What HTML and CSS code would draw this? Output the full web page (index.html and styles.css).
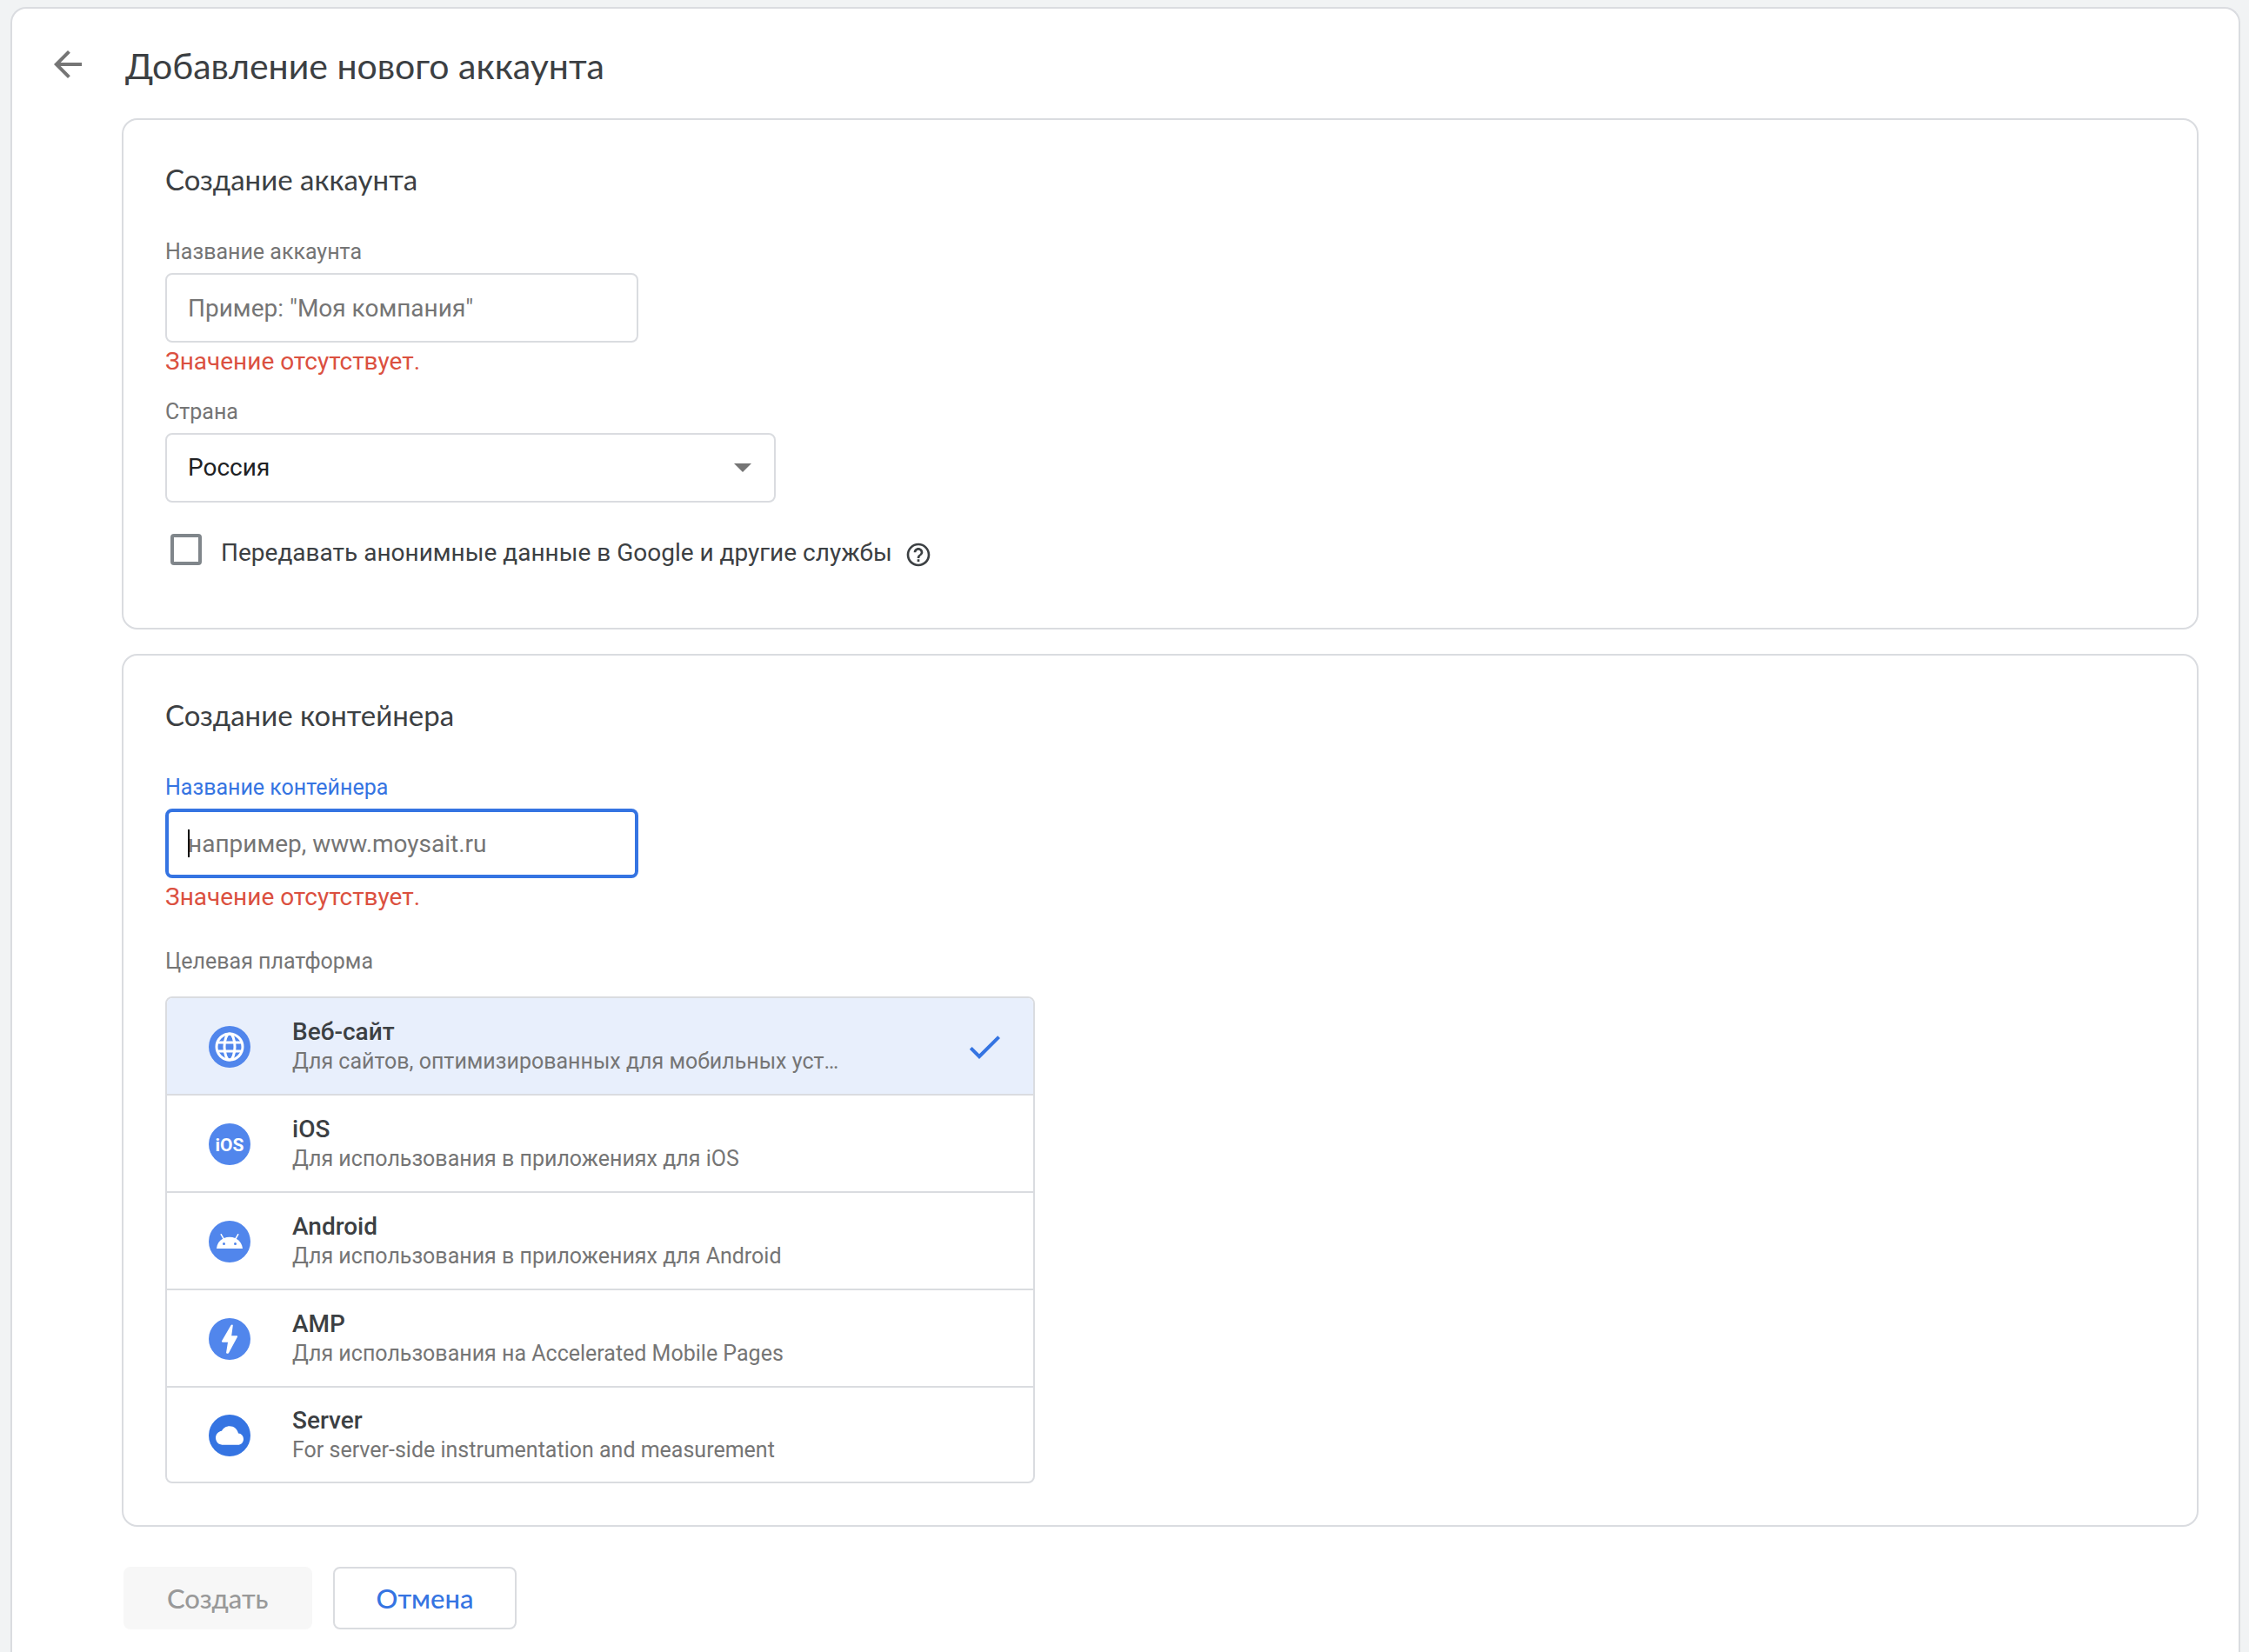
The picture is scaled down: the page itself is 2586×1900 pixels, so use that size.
FILE: index.html
```html
<!DOCTYPE html>
<html lang="ru">
<head>
    <meta charset="UTF-8">
    <meta name="viewport" content="width=device-width, initial-scale=1.0">
    <title>Добавление нового аккаунта</title>
    <link rel="stylesheet" href="styles.css">
</head>
<body>

    <main class="page">
        <header class="page-header">
            <button type="button" class="back" aria-label="Назад">
                <svg viewBox="0 0 24 24"><path d="M20 11H7.83l5.59-5.59L12 4l-8 8 8 8 1.41-1.41L7.83 13H20z"/></svg>
            </button>
            <h1>Добавление нового аккаунта</h1>
        </header>

        <form class="account-form">
            <section class="card">
                <h2>Создание аккаунта</h2>

                <div class="field">
                    <label for="account">Название аккаунта</label>
                    <input type="text" id="account" placeholder="Пример: &quot;Моя компания&quot;">
                    <p class="error">Значение отсутствует.</p>
                </div>

                <div class="field">
                    <label for="country">Страна</label>
                    <div class="select">
                        <select id="country">
                            <option>Россия</option>
                        </select>
                    </div>
                </div>

                <div class="share">
                    <input type="checkbox" id="share">
                    <label for="share">Передавать анонимные данные в Google и другие службы</label>
                    <button type="button" class="help" aria-label="Справка">
                        <svg viewBox="0 0 24 24"><path d="M11 18h2v-2h-2v2zm1-16C6.48 2 2 6.48 2 12s4.480 10 10 10 10-4.480 10-10S17.520 2 12 2zm0 18c-4.410 0-8-3.590-8-8s3.590-8 8-8 8 3.590 8 8-3.590 8-8 8zm0-14c-2.210 0-4 1.790-4 4h2c0-1.100.9-2 2-2s2 .9 2 2c0 2-3 1.750-3 5h2c0-2.250 3-2.500 3-5 0-2.210-1.790-4-4-4z"/></svg>
                    </button>
                </div>
            </section>

            <section class="card">
                <h2>Создание контейнера</h2>

                <div class="field active">
                    <label for="container">Название контейнера</label>
                    <div class="caret">
                        <input type="text" id="container" placeholder="например, www.moysait.ru">
                    </div>
                    <p class="error">Значение отсутствует.</p>
                </div>

                <p class="caption" id="platform-label">Целевая платформа</p>
                <ul class="platforms" role="listbox" aria-labelledby="platform-label">
                    <li class="platform selected" role="option" aria-selected="true">
                        <svg class="icon" viewBox="0 0 48 48">
                            <circle cx="24" cy="24" r="24"/>
                            <g class="line">
                                <circle cx="24" cy="24" r="15"/>
                                <ellipse cx="24" cy="24" rx="6" ry="15"/>
                                <path d="M10 19h28M10 29h28"/>
                            </g>
                        </svg>
                        <div class="info">
                            <h3>Веб-сайт</h3>
                            <p>Для сайтов, оптимизированных для мобильных уст…</p>
                        </div>
                        <svg class="check" viewBox="0 0 24 24"><path d="M9 16.170L4.830 12l-1.420 1.410L9 19 21 7l-1.410-1.410z"/></svg>
                    </li>
                    <li class="platform" role="option" aria-selected="false">
                        <svg class="icon" viewBox="0 0 48 48">
                            <circle cx="24" cy="24" r="24"/>
                            <text x="24" y="32" text-anchor="middle">iOS</text>
                        </svg>
                        <div class="info">
                            <h3>iOS</h3>
                            <p>Для использования в приложениях для iOS</p>
                        </div>
                    </li>
                    <li class="platform" role="option" aria-selected="false">
                        <svg class="icon" viewBox="0 0 48 48">
                            <circle cx="24" cy="24" r="24"/>
                            <path class="fill" d="M9 32c.5-5 3-9 7.200-11.300l-2.700-4.700c-.4-.9.9-1.500 1.300-.7l2.800 4.700c4-1.700 8.800-1.700 12.800 0l2.800-4.700c.5-.8 1.700-.2 1.300.7l-2.700 4.700C36 23 38.500 27 39 32z"/>
                            <circle cx="17.500" cy="26.500" r="1.500"/>
                            <circle cx="30.500" cy="26.500" r="1.500"/>
                        </svg>
                        <div class="info">
                            <h3>Android</h3>
                            <p>Для использования в приложениях для Android</p>
                        </div>
                    </li>
                    <li class="platform" role="option" aria-selected="false">
                        <svg class="icon" viewBox="0 0 48 48">
                            <circle cx="24" cy="24" r="24"/>
                            <path class="fill" d="M22 40.700h-1c-.8 0-1-.5-.9-1.200L22 27.700h-6c-1.200 0-1.300-.9-.8-1.700L25.500 8.300c.5-1 2.500-1.300 2.300.2L26.200 20.300h5.800c1 0 1.400.7.900 1.500L23.200 39.800c-.3.6-.7.900-1.200.9z"/>
                        </svg>
                        <div class="info">
                            <h3>AMP</h3>
                            <p>Для использования на Accelerated Mobile Pages</p>
                        </div>
                    </li>
                    <li class="platform server" role="option" aria-selected="false">
                        <svg class="icon" viewBox="0 0 48 48">
                            <circle cx="24" cy="24" r="24"/>
                            <path class="fill" d="M34 21.600C33 16.800 29 13.300 24 13.300c-4 0-7.300 2.200-9 5.500-4.200.5-7 4-7 8 0 4.400 3.500 8 8 8h17.500c3.600 0 6.500-3 6.500-6.600 0-3.500-2.600-6.400-6-6.600z"/>
                        </svg>
                        <div class="info">
                            <h3>Server</h3>
                            <p>For server-side instrumentation and measurement</p>
                        </div>
                    </li>
                </ul>
            </section>

            <div class="actions">
                <button type="submit" class="btn" disabled>Создать</button>
                <button type="button" class="btn">Отмена</button>
            </div>
        </form>
    </main>

</body>
</html>
```
FILE: styles.css
```css
* {
    box-sizing: border-box;
}

body {
    display: flex;
    min-height: 100vh;
    margin: 0;
    padding: 8px 10px 0 12px;
    background: #f1f3f4;
    color: #3c4043;
    font-family: Roboto, sans-serif;
    font-size: 28px;
    line-height: 32px;
}

h1, h2, h3, p, ul {
    margin: 0;
    padding: 0;
    font-weight: 400;
}

input, select, button {
    font: inherit;
    margin: 0;
}

.page {
    flex: 1;
    padding: 40px 46px 0;
    background: #fff;
    border: 2px solid #dadce0;
    border-bottom: none;
    border-radius: 18px 18px 0 0;
}

.page-header {
    display: flex;
    align-items: flex-start;
    gap: 42px;
    margin-left: -6px;
}

.back, .help {
    display: flex;
    padding: 0;
    border: none;
    background: none;
}

.back svg {
    width: 48px;
    height: 48px;
    fill: #757575;
}

h1 {
    font-family: Lato, Roboto, sans-serif;
    font-size: 41px;
    line-height: 52px;
}

.account-form {
    margin: 34px 0 0 80px;
}

.card {
    margin-bottom: 28px;
    padding: 48px;
    border: 2px solid #dadce0;
    border-radius: 18px;
}

.card h2 {
    margin-bottom: 48px;
    font-family: Lato, Roboto, sans-serif;
    font-size: 33px;
    line-height: 40px;
}

.field {
    margin-bottom: 26px;
}

.field label, .caption {
    display: block;
    margin-bottom: 8px;
    color: #757575;
    font-size: 25px;
    line-height: 32px;
}

.field input, .field select {
    display: block;
    width: 544px;
    height: 80px;
    padding: 0 24px;
    border: 2px solid #dadce0;
    border-radius: 8px;
    background: #fff;
    color: #202124;
    outline: none;
}

.field input::placeholder {
    color: #757575;
    opacity: 1;
}

.error {
    margin-top: 6px;
    color: #db5040;
}

.active label {
    color: #3574e2;
}

.active input {
    padding: 0 22px;
    border: 4px solid #3574e2;
    caret-color: transparent;
}

/* steady caret, does not blink */
.caret {
    position: relative;
}

.caret::after {
    content: "";
    position: absolute;
    top: 24px;
    left: 26px;
    width: 2px;
    height: 32px;
    background: #000;
}

.select {
    display: grid;
    width: 702px;
    align-items: center;
}

.select select {
    grid-area: 1 / 1;
    width: 100%;
    appearance: none;
}

.select::after {
    content: "";
    grid-area: 1 / 1;
    justify-self: end;
    margin-right: 28px;
    border: 10px solid transparent;
    border-top-color: #757575;
    border-bottom: none;
    pointer-events: none;
}

.share {
    display: flex;
    align-items: flex-start;
    padding: 10px 6px 20px;
}

.share input {
    appearance: none;
    width: 36px;
    height: 36px;
    border: 4px solid #80868b;
    border-radius: 4px;
}

.share label {
    margin: 6px 14px 0 22px;
}

.help {
    margin-top: 8px;
}

.help svg {
    width: 32px;
    height: 32px;
    fill: #3c4043;
}

.caption {
    margin: 42px 0 24px;
}

.platforms {
    width: 1000px;
    border: 2px solid #dadce0;
    border-radius: 8px;
    overflow: hidden;
    list-style: none;
}

.platform {
    display: flex;
    align-items: center;
    height: 112px;
    padding: 2px 32px 0 48px;
    border-bottom: 2px solid #dadce0;
}

.platform:last-child {
    height: 108px;
    border-bottom: none;
}

.selected {
    background: #e8effc;
}

.icon {
    width: 48px;
    height: 48px;
    margin-right: 48px;
    fill: #5186ec;
}

.server .icon {
    fill: #3574e2;
}

.icon .fill, .icon text {
    fill: #fff;
}

.icon text {
    font-size: 21px;
    font-weight: 700;
}

.icon .line {
    fill: none;
    stroke: #fff;
    stroke-width: 3;
}

.info {
    display: grid;
    flex: 1;
    gap: 2px;
}

.info h3 {
    font-size: 28px;
    font-weight: 500;
    line-height: 32px;
}

.info p {
    color: #757575;
    font-size: 25px;
    line-height: 32px;
}

.check {
    width: 48px;
    height: 48px;
    fill: #3574e2;
}

.actions {
    display: flex;
    gap: 24px;
    margin-top: 46px;
    padding: 0 2px;
}

.btn {
    height: 72px;
    padding: 0 48px;
    border: 2px solid #dadce0;
    border-radius: 8px;
    background: #fff;
    color: #3574e2;
    font-family: Lato, Roboto, sans-serif;
    font-size: 31px;
    font-weight: 500;
}

.btn:disabled {
    border-color: #f7f7f7;
    background: #f7f7f7;
    color: #999;
}
```
